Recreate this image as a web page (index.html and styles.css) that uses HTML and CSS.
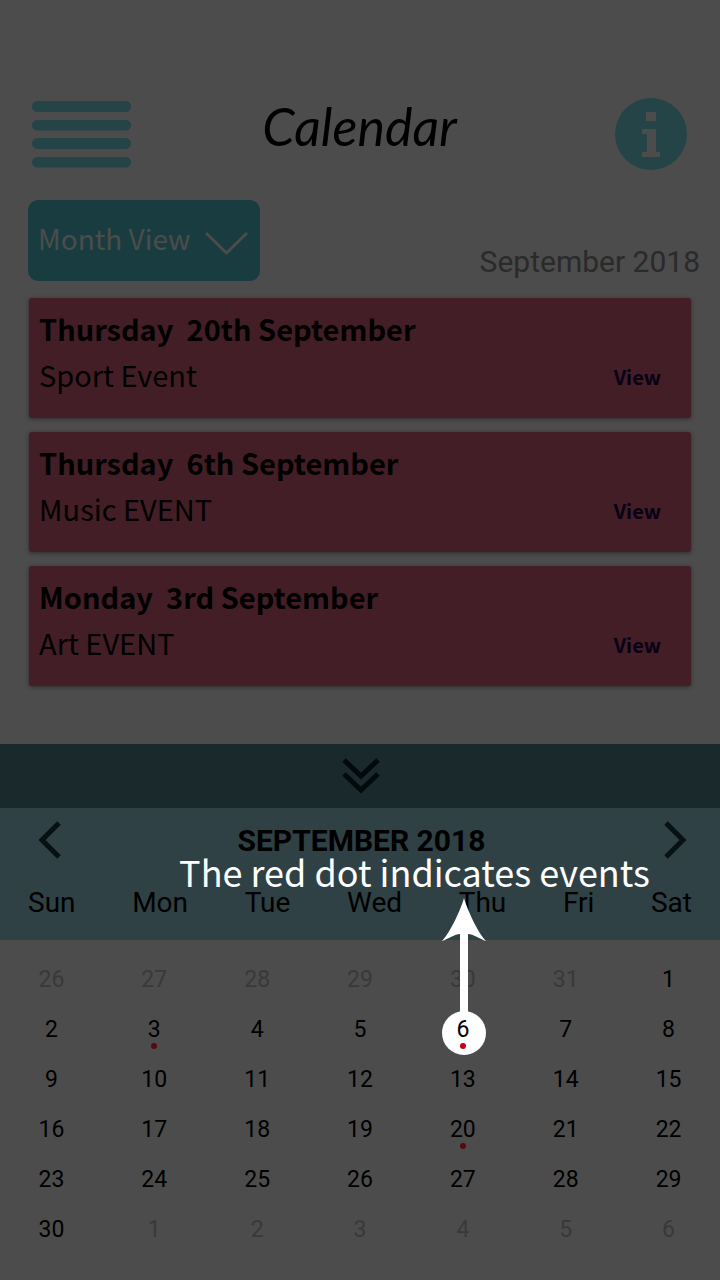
FILE: index.html
```html
<!DOCTYPE html>
<html lang="en">
<head>
<meta charset="utf-8">
<meta name="viewport" content="width=device-width, initial-scale=1">
<title>Calendar</title>
<link rel="stylesheet" href="styles.css">
</head>
<body>
<header class="topbar">
  <button class="icon-button" type="button" aria-label="Menu">
    <svg class="menu-icon" viewBox="0 0 99 67" aria-hidden="true"><rect y="0" width="99" height="11" rx="5.5"/><rect y="19" width="99" height="10.500" rx="5.2"/><rect y="37" width="99" height="11" rx="5.5"/><rect y="56" width="99" height="10.500" rx="5.2"/></svg>
  </button>
  <h1 class="title">Calendar</h1>
  <button class="icon-button info-button" type="button" aria-label="Information">
    <svg class="info-icon" viewBox="0 0 72 72" aria-hidden="true"><circle class="info-disc" cx="36" cy="36" r="36"/><path class="info-mark" d="M31 14h10v9H31zM27 31h14v23h4v5H27v-5h5V36h-5z"/></svg>
  </button>
</header>
<main>
  <div class="toolbar">
    <button class="view-button" type="button"><span class="view-label">Month View</span>
      <svg class="chevron" viewBox="0 0 43 25" aria-hidden="true"><path d="M1 2l20.500 20L42 2"/></svg>
    </button>
    <p class="period">September 2018</p>
  </div>
  <section class="events" aria-label="Events">
    <article class="card">
      <div><h2 class="card-date">Thursday&nbsp; 20th September</h2><p class="card-name">Sport Event</p></div>
      <a class="card-link" href="#sport">View</a>
    </article>
    <article class="card">
      <div><h2 class="card-date">Thursday&nbsp; 6th September</h2><p class="card-name">Music EVENT</p></div>
      <a class="card-link" href="#music">View</a>
    </article>
    <article class="card">
      <div><h2 class="card-date">Monday&nbsp; 3rd September</h2><p class="card-name">Art EVENT</p></div>
      <a class="card-link" href="#art">View</a>
    </article>
  </section>
  <button class="collapse" type="button" aria-label="Collapse calendar">
    <svg class="collapse-icon" viewBox="0 0 38 36" aria-hidden="true"><path d="M3 2l17 16L37 2M3 16l17 16 17-16"/></svg>
  </button>
  <section class="calendar" aria-label="Month calendar">
    <div class="month-bar">
      <button class="icon-button" type="button" aria-label="Previous month"><svg class="arrow-icon" viewBox="0 0 24 38" aria-hidden="true"><path d="M22 1L5 18l17 17"/></svg></button>
      <h2 class="month">SEPTEMBER 2018</h2>
      <button class="icon-button" type="button" aria-label="Next month"><svg class="arrow-icon" viewBox="0 0 24 38" aria-hidden="true"><path d="M4 1l17 17L4 35"/></svg></button>
    </div>
    <table class="grid">
      <thead><tr><th>Sun</th><th>Mon</th><th>Tue</th><th>Wed</th><th>Thu</th><th>Fri</th><th>Sat</th></tr></thead>
      <tbody>
        <tr><td class="out">26</td><td class="out">27</td><td class="out">28</td><td class="out">29</td><td class="out">30</td><td class="out">31</td><td>1</td></tr>
        <tr><td>2</td><td class="event">3</td><td>4</td><td>5</td><td class="event spot"><span class="day">6</span>
          <div class="callout" role="tooltip"><p class="callout-text">The red dot indicates events</p><svg class="callout-arrow" viewBox="0 0 44 114" aria-hidden="true"><path d="M22 0C25 11 36 35 44 43C38 41 31 36 26 36V114H18V36C13 36 6 41 0 43C8 35 19 11 22 0z"/></svg></div>
        </td><td>7</td><td>8</td></tr>
        <tr><td>9</td><td>10</td><td>11</td><td>12</td><td>13</td><td>14</td><td>15</td></tr>
        <tr><td>16</td><td>17</td><td>18</td><td>19</td><td class="event">20</td><td>21</td><td>22</td></tr>
        <tr><td>23</td><td>24</td><td>25</td><td>26</td><td>27</td><td>28</td><td>29</td></tr>
        <tr><td>30</td><td class="out">1</td><td class="out">2</td><td class="out">3</td><td class="out">4</td><td class="out">5</td><td class="out">6</td></tr>
      </tbody>
    </table>
  </section>
</main>
</body>
</html>
```
FILE: styles.css
```css
* { box-sizing: border-box; }
body {
  margin: 0;
  min-height: 100vh;
  background: #4c4c4c;
  color: #000;
  font-family: Roboto, sans-serif;
}
h1, h2, p { margin: 0; font-weight: 400; }
button { border: 0; padding: 0; background: none; color: inherit; font: inherit; cursor: pointer; }
svg { display: block; }

.topbar {
  display: grid;
  grid-template-columns: 1fr auto 1fr;
  align-items: center;
  justify-items: start;
  padding: 98px 33px 30px 32px;
}
.info-button { justify-self: end; }
.menu-icon { width: 99px; height: 67px; fill: #244447; }
.info-icon { width: 72px; height: 72px; }
.info-disc { fill: #244447; }
.info-mark { fill: #4c4c4c; }
.title { padding-bottom: 16px; font: italic 400 52px/56px Lato, cursive; }

.toolbar {
  display: flex;
  justify-content: space-between;
  align-items: flex-end;
  padding: 0 20px 0 28px;
}
.view-button {
  display: flex;
  align-items: center;
  gap: 14px;
  padding: 16px 12px 21px 10px;
  border-radius: 10px;
  background: #193c40;
  color: #4c4c4c;
  font: 400 28px/44px "Noto Sans CJK SC", sans-serif;
}
.chevron { width: 43px; height: 25px; margin-top: 10px; fill: none; stroke: #4c4c4c; stroke-width: 3; }
.period { color: #2a2a2a; font-size: 30px; line-height: 38px; }

.events {
  display: flex;
  flex-direction: column;
  gap: 14px;
  padding: 17px 29px 58px;
  font-family: "Noto Sans CJK SC", sans-serif;
}
.card {
  display: flex;
  justify-content: space-between;
  align-items: flex-end;
  padding: 7px 30px 21px 10px;
  border-radius: 3px;
  background: #431e26;
  box-shadow: 0 1px 4px #2c2c2c;
}
.card-date { font-size: 29px; line-height: 46px; font-weight: 700; }
.card-name { font-size: 29px; line-height: 46px; }
.card-link { color: #080014; font-size: 20px; line-height: 40px; font-weight: 700; text-decoration: none; }

.collapse { display: flex; justify-content: center; align-items: center; width: 100%; height: 64px; background: #19292c; }
.collapse-icon { width: 38px; height: 36px; overflow: visible; fill: none; stroke: #020a0b; stroke-width: 5; }

.month-bar {
  display: flex;
  justify-content: space-between;
  align-items: center;
  padding: 14px 34px 14px 37px;
  background: #2f4144;
}
.arrow-icon { width: 24px; height: 38px; overflow: visible; fill: none; stroke: #071012; stroke-width: 5; }
.month { font-size: 30px; line-height: 36px; font-weight: 700; }

.grid { display: block; }
.grid thead, .grid tbody { display: block; }
.grid tr { display: flex; }
.grid thead { padding: 11px 28px 19px; background: #2f4144; }
.grid thead tr { justify-content: space-between; }
.grid th { padding: 0; font-size: 28px; line-height: 36px; font-weight: 400; }
.grid tbody { padding: 15px 0 25px; }
.grid td { position: relative; flex: 1; padding: 0; font-size: 23px; line-height: 50px; text-align: center; }
.grid .out { color: #393939; }
.event::after {
  content: "";
  position: absolute;
  left: calc(50% - 3px);
  bottom: 6px;
  width: 6px;
  height: 6px;
  border-radius: 50%;
  background: #56090f;
}
.spot::before {
  content: "";
  position: absolute;
  left: calc(50% - 21px);
  top: 6px;
  width: 44px;
  height: 44px;
  border-radius: 50%;
  background: #fff;
}
.spot::after { background: #c4000f; }
.day { position: relative; }
.callout { position: absolute; bottom: 43px; right: calc(50% - 187px); display: flex; flex-direction: column; }
.callout-text { color: #fff; font: 400 36px/54px "Noto Sans CJK SC", sans-serif; white-space: nowrap; }
.callout-arrow { width: 44px; height: 114px; margin-right: 164px; align-self: flex-end; fill: #fff; }
```
